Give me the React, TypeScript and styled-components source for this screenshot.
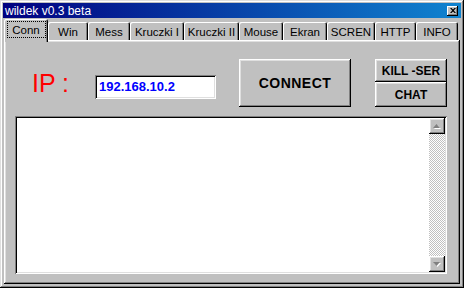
import styled, { createGlobalStyle } from "styled-components";

const GlobalStyle = createGlobalStyle`
  html, body {
    margin: 0;
    padding: 0;
    background: #c0c0c0;
  }
  * {
    box-sizing: border-box;
  }
`;

const raised = `
  box-shadow: inset -1px -1px #000, inset 1px 1px #fff, inset -2px -2px #808080,
    inset 2px 2px #dfdfdf;
`;

const Window = styled.div`
  width: 464px;
  height: 288px;
  padding: 3px;
  display: flex;
  flex-direction: column;
  background: #c0c0c0;
  box-shadow: inset -1px -1px #000, inset 1px 1px #dfdfdf, inset -2px -2px #808080,
    inset 2px 2px #fff;
  font-family: "Liberation Sans", Arial, sans-serif;
`;

const TitleBar = styled.div`
  height: 15px;
  display: flex;
  align-items: center;
  justify-content: space-between;
  padding: 0 3px 0 2px;
  background: linear-gradient(90deg, #000080, #1084d0);
  color: #fff;
  font-size: 12px;
`;

const CloseBtn = styled.div`
  width: 11px;
  height: 10px;
  display: flex;
  align-items: center;
  justify-content: center;
  background: #c0c0c0;
  box-shadow: inset -1px -1px #000, inset 1px 1px #fff, inset -2px -2px #808080;
`;

const TabRow = styled.div`
  height: 21px;
  margin-top: 1px;
  padding-left: 1px;
  display: flex;
  align-items: flex-end;
`;

const Tab = styled.div<{ $w: number; $active?: boolean }>`
  width: ${(p) => p.$w}px;
  height: ${(p) => (p.$active ? 23 : 18)}px;
  margin-bottom: ${(p) => (p.$active ? -2 : 0)}px;
  position: relative;
  z-index: ${(p) => (p.$active ? 1 : 0)};
  display: flex;
  align-items: ${(p) => (p.$active ? "flex-start" : "center")};
  justify-content: center;
  padding-top: ${(p) => (p.$active ? 3 : 1)}px;
  background: #c0c0c0;
  border-radius: 2px 2px 0 0;
  box-shadow: inset 1px 1px #fff, inset -1px 0 #000, inset -2px 0 #808080;
  font-size: 11.5px;
  color: #000;
`;

const Focus = styled.span`
  width: 37px;
  height: 15px;
  display: flex;
  align-items: center;
  justify-content: center;
  outline: 1px dotted #000;
`;

const Panel = styled.div`
  flex: 1;
  margin: 0 1px 1px;
  padding: 19px 13px 10px 11px;
  display: flex;
  flex-direction: column;
  gap: 9px;
  background: #c0c0c0;
  ${raised}
`;

const TopRow = styled.div`
  height: 48px;
  display: flex;
  align-items: flex-start;
`;

const IpLabel = styled.div`
  margin: 11px 27px 0 17px;
  width: 36px;
  font-size: 25px;
  line-height: 26px;
  color: #ff0000;
  white-space: nowrap;
`;

const IpField = styled.div`
  width: 121px;
  height: 24px;
  margin-top: 16px;
  padding: 3px 4px;
  background: #fff;
  box-shadow: inset 1px 1px #808080, inset -1px -1px #fff, inset 2px 2px #000,
    inset -2px -2px #dfdfdf;
  color: #0000ff;
  font-weight: bold;
  font-size: 13px;
  line-height: 17px;
`;

const Button = styled.div<{ $w: number; $h: number; $size: number }>`
  width: ${(p) => p.$w}px;
  height: ${(p) => p.$h}px;
  display: flex;
  align-items: center;
  justify-content: center;
  background: #c0c0c0;
  ${raised}
  font-weight: bold;
  font-size: ${(p) => p.$size}px;
  color: #000;
`;

const SideButtons = styled.div`
  margin-left: 24px;
  display: flex;
  flex-direction: column;
`;

const Connect = styled(Button)`
  margin-left: 23px;
  letter-spacing: 0.5px;
`;

const LogBox = styled.div`
  flex: 1;
  display: flex;
  padding: 2px;
  background: #fff;
  box-shadow: inset 1px 1px #808080, inset -1px -1px #fff, inset 2px 2px #000,
    inset -2px -2px #dfdfdf;
`;

const LogText = styled.div`
  flex: 1;
`;

const ScrollBar = styled.div`
  width: 16px;
  display: flex;
  flex-direction: column;
`;

const Track = styled.div`
  flex: 1;
  background: repeating-conic-gradient(#c0c0c0 0% 25%, #fff 0% 50%) 0 0 / 2px 2px;
`;

const ArrowBtn = styled.div`
  width: 16px;
  height: 16px;
  display: flex;
  align-items: center;
  justify-content: center;
  background: #c0c0c0;
  ${raised}
`;

const tabs = [
  { label: "Conn", w: 44 },
  { label: "Win", w: 40 },
  { label: "Mess", w: 42 },
  { label: "Kruczki I", w: 54 },
  { label: "Kruczki II", w: 55 },
  { label: "Mouse", w: 44 },
  { label: "Ekran", w: 44 },
  { label: "SCREN", w: 48 },
  { label: "HTTP", w: 41 },
  { label: "INFO", w: 42 },
];

function Arrow({ down }: { down?: boolean }) {
  return (
    <svg width="8" height="5" viewBox="0 0 8 5">
      {down ? (
        <>
          <polygon points="1,1 8,1 4.5,5" fill="#fff" />
          <polygon points="0,0 7,0 3.5,4" fill="#808080" />
        </>
      ) : (
        <>
          <polygon points="1,5 8,5 4.5,1" fill="#fff" />
          <polygon points="0,4 7,4 3.5,0" fill="#808080" />
        </>
      )}
    </svg>
  );
}

export default function App() {
  return (
    <>
      <GlobalStyle />
      <Window>
        <TitleBar>
          <span>wildek v0.3 beta</span>
          <CloseBtn>
            <svg width="6" height="5" viewBox="0 0 6 5">
              <path d="M0 0h1.5l1.5 1.5 1.5-1.5h1.5l-2.2 2.5 2.2 2.5h-1.5l-1.5-1.5-1.5 1.5h-1.5l2.2-2.5z" fill="#000" />
            </svg>
          </CloseBtn>
        </TitleBar>
        <TabRow>
          {tabs.map((t, i) => (
            <Tab key={t.label} $w={t.w} $active={i === 0}>
              {i === 0 ? <Focus>{t.label}</Focus> : t.label}
            </Tab>
          ))}
        </TabRow>
        <Panel>
          <TopRow>
            <IpLabel>IP :</IpLabel>
            <IpField>192.168.10.2</IpField>
            <Connect $w={112} $h={48} $size={14}>
              CONNECT
            </Connect>
            <SideButtons>
              <Button $w={72} $h={23} $size={12}>
                KILL -SER
              </Button>
              <Button $w={72} $h={25} $size={12}>
                CHAT
              </Button>
            </SideButtons>
          </TopRow>
          <LogBox>
            <LogText />
            <ScrollBar>
              <ArrowBtn>
                <Arrow />
              </ArrowBtn>
              <Track />
              <ArrowBtn>
                <Arrow down />
              </ArrowBtn>
            </ScrollBar>
          </LogBox>
        </Panel>
      </Window>
    </>
  );
}
